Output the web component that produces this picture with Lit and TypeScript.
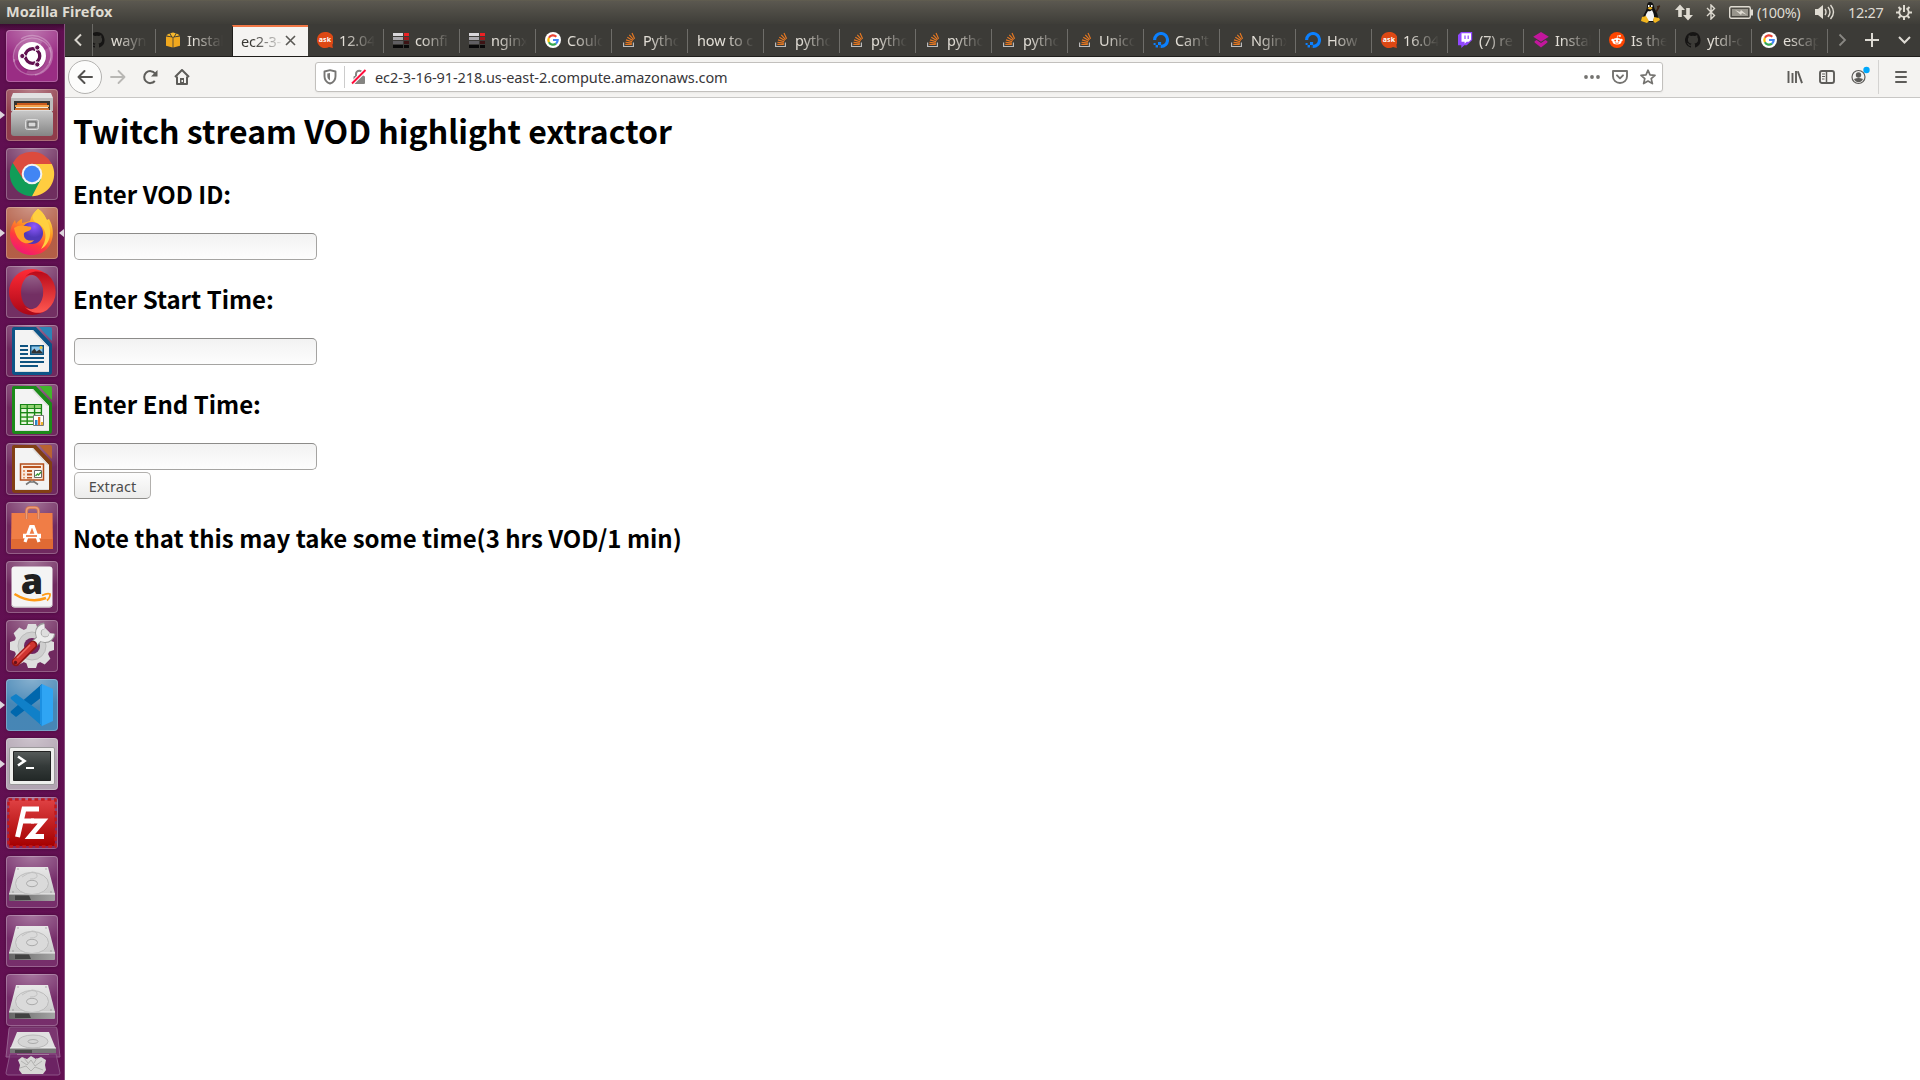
import { LitElement, html, css, TemplateResult } from "lit";
import { customElement } from "lit/decorators.js";

type Icon = () => TemplateResult;

/* ---------- tab favicons (16x16) ---------- */
const github: Icon = () => html`<svg class="fav" viewBox="0 0 16 16"><path fill="#161514" d="M8 0a8 8 0 0 0-2.5 15.6c.4.1.5-.2.5-.4v-1.500c-2.200.5-2.700-1-2.700-1-.4-.9-.9-1.200-.9-1.200-.7-.5.1-.5.1-.5.8.1 1.200.8 1.200.8.7 1.300 1.900.9 2.300.7.1-.5.3-.9.5-1.100-1.800-.2-3.600-.9-3.600-4 0-.9.300-1.600.8-2.100-.1-.2-.4-1 .1-2.100 0 0 .7-.2 2.200.8a7.500 7.500 0 0 1 4 0c1.500-1 2.200-.8 2.200-.8.4 1.100.2 1.900.1 2.100.5.6.8 1.300.8 2.100 0 3.100-1.900 3.700-3.700 3.900.3.300.6.8.6 1.500v2.200c0 .2.1.5.500.4A8 8 0 0 0 8 0z"/></svg>`;
const aws: Icon = () => html`<svg class="fav" viewBox="0 0 16 16"><path fill="#f0a81e" d="M1 4.500 7.600 5.600V15.500L1 13.700zM8.400 5.600 15 4.500v9.200L8.400 15.500z"/><path fill="#f8b92c" d="M1.300 3.200 4.400 1.600l1.700 3zM5.200 1.200 8 .4l2.800.8L8.800 4.800H7.200zM11.600 1.600l3.100 1.600-4.800 1.400z"/></svg>`;
const ask: Icon = () => html`<svg class="fav" viewBox="0 0 16 16"><path fill="#dd4814" d="M8 0a8 8 0 1 0 4 14.900c1.200.3 2.400.8 3.900 1-.3-1.300-.5-2.400-.4-3.600A8 8 0 0 0 8 0z"/><text x="7.900" y="10.400" text-anchor="middle" font-family="Open Sans, sans-serif" font-weight="700" font-size="7" textLength="12.500" fill="#fff">ask</text></svg>`;
const bars: Icon = () => html`<svg class="fav" viewBox="0 0 16 16" shape-rendering="crispEdges"><path fill="#d9d7da" d="M0 1h10v3H0z"/><path fill="#ee2124" d="M11 1h5v3h-5z"/><path fill="#aaa8ac" d="M0 5h10v3H0z"/><path fill="#a1181c" d="M11 5h5v3h-5z"/><path fill="#605f62" d="M0 9h10v3H0z"/><path fill="#3d1415" d="M11 9h5v3h-5z"/><path fill="#090909" d="M0 13h10v3H0zM11 13h5v3h-5z"/></svg>`;
const google: Icon = () => html`<svg class="fav" viewBox="0 0 16 16"><circle cx="8" cy="8" r="8" fill="#fff"/><g fill="none" stroke-width="2.200"><path stroke="#ea4335" d="M3.900 5.800A4.700 4.700 0 0 1 11.300 4.700"/><path stroke="#fbbc05" d="M3.900 10.200a4.700 4.700 0 0 1 0-4.400"/><path stroke="#34a853" d="M3.900 10.200A4.700 4.700 0 0 0 11 11.600"/><path stroke="#4285f4" d="M8 8h4.700a4.700 4.700 0 0 1-1.700 3.600"/></g></svg>`;
const stack: Icon = () => html`<svg class="fav" viewBox="0 0 16 16"><path fill="none" stroke="#bcbbbb" stroke-width="1.200" d="M2.600 10.500v4h9.800v-4"/><g stroke="#e87922" stroke-width="1.150"><path d="M4.300 12.400h6.500M4.400 10.300l6.500.8M5 7.900l6.200 1.900M6.300 5.300l5.500 3.300M8.300 2.900l4.300 4.800M11 1.100l2.600 5.700"/></g></svg>`;
const ocean: Icon = () => html`<svg class="fav" viewBox="0 0 16 16"><path fill="none" stroke="#0b80ff" stroke-width="3.100" d="M1.600 8A6.450 6.450 0 1 1 8 14.400"/><path fill="#0b80ff" d="M5 9.900h3.100V13H5zM2.600 13H5v2.400H2.600zM.6 11h2v2h-2z"/><path fill="#0b80ff" d="M6.500 12.900H8V16H6.500z" opacity=".35"/></svg>`;
const twitch: Icon = () => html`<svg class="fav" viewBox="0 0 16 16"><path fill="#9147ff" d="M4 0 1 3v10.200h3.300V16l3-2.800h2.500L15.200 8V0z"/><path fill="#fff" d="M4.500 1.200H14v6.300l-2.200 2.200H9.600l-2 2v-2H4.500z"/><path fill="#9147ff" d="M7.400 3.400h1.200V7H7.400zM10.600 3.400h1.200V7h-1.200z"/></svg>`;
const layers: Icon = () => html`<svg class="fav" viewBox="0 0 16 16"><path fill="#c2169c" d="M8 0l7.800 4.800L8 9.700.2 4.800zM1.600 9.200 3.600 8 8 10.900 12.400 8l2 1.200v1.400L8 15.600l-6.400-5z"/></svg>`;
const reddit: Icon = () => html`<svg class="fav" viewBox="0 0 16 16"><circle cx="8" cy="8" r="8" fill="#ff4500"/><ellipse cx="8" cy="9.300" rx="4.500" ry="3.300" fill="#fff"/><circle cx="3.500" cy="8" r="1.200" fill="#fff"/><circle cx="12.500" cy="8" r="1.200" fill="#fff"/><circle cx="11" cy="3.900" r=".9" fill="#fff"/><path d="M8 6.500l.6-2.800 2.400.4" stroke="#fff" stroke-width=".7" fill="none"/><circle cx="6.200" cy="8.600" r=".9" fill="#ff4500"/><circle cx="9.800" cy="8.600" r=".9" fill="#ff4500"/><path d="M6 10.700q2 1.300 4 0" stroke="#ff4500" stroke-width=".7" fill="none"/></svg>`;

/* ---------- launcher icons (52x52 tiles) ---------- */
const ubuntu: Icon = () => html`<svg class="art" viewBox="0 0 52 52"><g fill="none" stroke="#fff" stroke-opacity=".28" stroke-width="1.300"><path d="M8 32C4 14 22 2 37 11c8 5 10 15 6 22"/><path d="M15 9c15-10 35 3 31 20-2 9-9 15-17 16"/><path d="M44 17c6 15-8 32-24 27-7-2-12-8-12-15"/></g><path fill="#fff" opacity=".13" d="M8 31C4 14 22 2 37 11L26 26zM44 17c6 15-8 32-24 27l8-18z"/><circle cx="26" cy="27" r="14.300" fill="#590b49" opacity=".3"/><circle cx="26" cy="26" r="14" fill="#fff"/><circle cx="26.500" cy="26" r="7.200" fill="none" stroke="#611150" stroke-width="3.400"/><path stroke="#fff" stroke-width="1.200" d="M26.500 26 17 26M26.500 26l5-8.500M26.500 26l5 8.500"/><circle cx="26.500" cy="26" r="5.400" fill="#fff"/><g fill="#611150" stroke="#fff" stroke-width="1"><circle cx="16.300" cy="26" r="2.600"/><circle cx="31.300" cy="17.500" r="2.600"/><circle cx="31.300" cy="34.500" r="2.600"/></g></svg>`;
const files: Icon = () => html`<svg class="art" viewBox="0 0 52 52"><defs><linearGradient id="fg" x2="0" y2="1"><stop stop-color="#c9c9c9"/><stop offset="1" stop-color="#858585"/></linearGradient></defs><path fill="#e2e2e2" d="M7 4h38l2 5v10H5V9z"/><path fill="#bcbcbc" d="M5 9h42v13H5z"/><path fill="#353330" d="M8 12h36v11H8z"/><path fill="#c8591c" d="M11 14h30v3H11z"/><path fill="#f4a24b" d="M9 16h34v2H9z"/><path fill="#f4ead5" d="M10 18h32v1.200H10z"/><path fill="#de742c" d="M9 19.200h34v2H9z"/><path fill="url(#fg)" d="M7 21h38l2 3v20q0 3-3 3H8q-3 0-3-3V24z"/><path d="M7 21.500h38" stroke="#ddd"/><rect x="19.500" y="30.500" width="13" height="10" rx="2" fill="#aaa" stroke="#ddd"/><rect x="22" y="33" width="8" height="5" fill="#d8d8d8" stroke="#555"/></svg>`;
const chrome: Icon = () => html`<svg class="art" viewBox="0 0 52 52"><path fill="#109d58" d="M26 26 6.800 14.900A22.200 22.200 0 0 0 26 48.200L35.600 31.500z"/><path fill="#ffcd40" d="M26 16h19.800A22.200 22.200 0 0 1 26 48.200L35 31z"/><path fill="#dc4b3e" d="M26 3.800A22.200 22.200 0 0 0 6.800 14.900L17 31l9-15h19.800A22.200 22.200 0 0 0 26 3.800z"/><circle cx="26" cy="26" r="10.300" fill="#f3f3f3"/><circle cx="26" cy="26" r="8.300" fill="#4285f4"/></svg>`;
const firefox: Icon = () => html`<svg class="art" viewBox="0 0 52 52"><defs><linearGradient id="ff" x1=".75" y1="0" x2=".3" y2="1"><stop stop-color="#fff34f"/><stop offset=".4" stop-color="#ff9a22"/><stop offset=".7" stop-color="#ff3b3c"/><stop offset="1" stop-color="#f0147a"/></linearGradient><radialGradient id="fp" cx=".6" cy=".2"><stop stop-color="#9059ff"/><stop offset="1" stop-color="#5138b8"/></radialGradient></defs><path fill="url(#ff)" d="M32 2c5 3 7 7 9 11l2-1c9 15 2 36-17 36C12 48 4 38 4 27c0-5 2-10 5-14l1 4c2-3 4-4 6-5l0 4c4-1 6-1 8-2 1-5 4-9 8-12z"/><circle cx="26" cy="26" r="11" fill="url(#fp)"/><path fill="#ff9d27" d="M8 21c4-3 8-3 12-2 4 1 6 0 5 3-1 2-4 2-7 4-1 6 4 9 10 7-4 6-17 5-20-12z"/><path fill="#ffd040" d="M32 2c-5 4-7 9-3 13 11 4 14 15 6 27 10-5 12-20 5-30-2-4-4-8-8-10z"/></svg>`;
const opera: Icon = () => html`<svg class="art" viewBox="0 0 52 52"><defs><linearGradient id="og" x2="0" y2="1"><stop stop-color="#ff2b36"/><stop offset="1" stop-color="#aa0717"/></linearGradient><linearGradient id="oh" x2="0" y2="1"><stop stop-color="#b90a1a"/><stop offset="1" stop-color="#ff5750"/></linearGradient></defs><path fill="url(#og)" fill-rule="evenodd" d="M26 3a23 23 0 1 0 0 46 23 23 0 1 0 0-46zM26.500 9c7 0 11 8 11 17s-4 17-11 17-11.500-8-11.500-17 4.500-17 11.500-17z"/><path fill="url(#oh)" d="M19 11c4-5 12-8 22-3a23 23 0 0 1 0 36c-7 5-17 3-22-3 4 3 9 3 13-1 7-7 7-21 0-28-4-4-9-4-13-1z"/></svg>`;
const office = (edge: string, fold: string, inner: TemplateResult) => html`<svg class="art" viewBox="0 0 52 52"><path fill="${edge}" d="M8 2h22l16 17v28q0 3-3 3H9q-3 0-3-3V4q0-2 2-2z"/><path fill="#f3f3f3" d="M9 5h18l16 17v25H9z"/><path fill="#dedede" d="M9 46h34v1H9zM27 5l16 17h-2L26 6z"/><path fill="${fold}" d="M33 2h11q2 0 2 2v12z"/>${inner}</svg>`;
const writer: Icon = () => office("#0d5487", "#2d83b5", html`<svg><g fill="#0f5380"><path d="M14 20h8v2h-8zM14 24h8v2h-8zM14 28h8v2h-8zM14 32h24v2H14zM14 36h24v2H14zM14 40h18v2H14z"/><path d="M24 20h14v10H24z"/></g><path fill="#8cc8ed" d="M25.500 21.500h11v7h-11z"/><path fill="#333" d="M25.500 28.500v-2l3-3 2 3 3-2 3 3v1z"/><circle cx="35" cy="22.500" r="1.500" fill="#eec543"/></svg>`);
const calc: Icon = () => office("#1c8a19", "#43b52c", html`<svg><path fill="#93d273" d="M14 20h22v21H14z"/><path fill="#e8f7df" d="M15.500 25h5v3h-5zM22 25h6v3h-6zM29.500 25h5v3h-5zM15.500 29.500h5v3h-5zM22 29.500h6v3h-6zM29.500 29.500h5v3h-5zM15.500 34h5v2.500h-5zM22 34h6v2.500h-6zM15.500 38h5v2h-5zM22 38h6v2h-6z"/><path d="M14.500 20.500h21v20h-21zM14 24.500h22M14 28.700h22M14 33h22M14 37h22M21.200 20v21M28.500 20v21" fill="none" stroke="#188417" stroke-width="1.200"/><path fill="#fff" stroke="#777" d="M27.500 31.500h10v10h-10z"/><path fill="#2c86c6" d="M29 36h2.500v5H29z"/><path fill="#e76a23" d="M32 33h2.300v8H32z"/><path fill="#edb52d" d="M35 38h2v3h-2z"/></svg>`);
const impress: Icon = () => office("#823f14", "#b86332", html`<svg><path fill="#f9ebdf" stroke="#b34e1b" stroke-width="1.500" d="M14.500 21h23v16h-23z"/><path fill="#ba5420" d="M17 23h18v2H17zM21 27h5v2h-5zM21 30.500h5v2h-5zM21 34h5v1.500h-5z"/><path fill="#e59b6a" d="M17 27h2v2h-2zM17 30.500h2v2h-2zM17 34h2v1.500h-2z"/><path fill="#fff" stroke="#666" d="M28.500 27.500h7v7h-7z"/><path d="m29.500 33 2-2 1 1 2.500-3" fill="none" stroke="#399b32" stroke-width="1.300"/><path d="M25 38l-5 3.500M27 38l5 3.500M23 39h6" stroke="#777" stroke-width="1.600"/></svg>`);
const software: Icon = () => html`<svg class="art" viewBox="0 0 52 52"><path fill="#f07d46" d="M5.500 11h41l.5 36H5z"/><path fill="#e06a34" d="M5.200 37h41.700L47 47H5z"/><path d="M20.500 17V9.500q0-4 3.500-4h5q3.500 0 3.500 4V17" fill="none" stroke="#d07350" stroke-width="3"/><path d="M20.500 17V9.500q0-4 3.500-4h5q3.500 0 3.500 4V17" fill="none" stroke="#eb9c78" stroke-width="1.400"/><g fill="none" stroke="#fff" stroke-width="3.200"><path d="M19 40l5.700-15.500h2.600L33 40"/><path d="M17 34h18" stroke-width="4.500"/></g><path d="M20 34h11" stroke="#ef7740" stroke-width="1.700"/></svg>`;
const amazon: Icon = () => html`<svg class="art" viewBox="0 0 52 52"><rect x="5.500" y="5.500" width="41" height="41" rx="3" fill="#f4f4f4"/><path d="M6 44q0 2 3 2h34q3 0 3-2" fill="none" stroke="#c9c9c9"/><text x="26" y="33" text-anchor="middle" font-family="Open Sans, sans-serif" font-weight="800" font-size="36" fill="#202020">a</text><path d="M8.500 33q16 10 31.500 4" fill="none" stroke="#ff9a16" stroke-width="2.600"/><path d="M36 34.500q5-2.500 8-1.500 .5 3-3 6.500" fill="none" stroke="#ff9a16" stroke-width="1.800"/></svg>`;
const settings: Icon = () => html`<svg class="art" viewBox="0 0 52 52"><g fill="#dedede"><circle cx="26" cy="26" r="18"/>${[0, 45, 90, 135].map(a => html`<svg overflow="visible"><path transform="rotate(${a} 26 26)" d="M22 4h8l2 6v32l-2 6h-8l-2-6V10z"/></svg>`)}</g><circle cx="26" cy="26" r="14" fill="#cfcfcf" stroke="#bbb"/><circle cx="26" cy="26" r="8" fill="#702560"/><path d="M28 24 36 16" stroke="#999" stroke-width="7"/><path d="M38.500 5.800A7 7 0 1 0 46.200 13.500" fill="none" stroke="#999" stroke-width="6.400"/><path d="M28 24 36 16" stroke="#ececec" stroke-width="5.200"/><path d="M38.500 6.300A6.700 6.700 0 1 0 45.700 13.500" fill="none" stroke="#ececec" stroke-width="4.800"/><path d="M10 42 27 25" stroke="#8e1515" stroke-width="8.500" stroke-linecap="round"/><path d="M10 41.500 26.500 25" stroke="#cf3430" stroke-width="6" stroke-linecap="round"/><path d="M11 38 24 25" stroke="#ef6e66" stroke-width="1.400"/><circle cx="9.500" cy="42.500" r="1.700" fill="#661019"/></svg>`;
const vscode: Icon = () => html`<svg class="art" viewBox="0 0 52 52"><path fill="#0067ad" d="M36 5v13L10 38l-5-4q-1-1 0-2z"/><path fill="#1080c8" d="M36 47V34L10 15l-5 3q-1 1 0 2z"/><path fill="#2fa5f4" d="m36 5 11 5v32l-11 5-2-3V8z"/><path fill="#1c90e2" d="M36 5v42l-2-3V8z"/></svg>`;
const terminal: Icon = () => html`<svg class="art" viewBox="0 0 52 52"><defs><linearGradient id="tg" x2="0" y2="1"><stop stop-color="#565b5a"/><stop offset=".5" stop-color="#343a39"/><stop offset="1" stop-color="#222827"/></linearGradient></defs><rect x="3.500" y="9.500" width="45" height="37" rx="1.500" fill="#eeeeec" stroke="#9b999b"/><path fill="url(#tg)" stroke="#222" d="M7.500 13.500h37v29h-37z"/><path d="m12 18.500 6.500 4.500-6.500 4.500" fill="none" stroke="#fff" stroke-width="2.600"/><path d="M20 30h8" stroke="#fff" stroke-width="2"/></svg>`;
const filezilla: Icon = () => html`<svg class="art" viewBox="0 0 52 52"><defs><linearGradient id="zg" x2="0" y2="1"><stop stop-color="#df4143"/><stop offset="1" stop-color="#a50000"/></linearGradient></defs><rect x="3" y="3" width="46" height="46" fill="url(#zg)"/><rect x="2.500" y="2.500" width="47" height="47" fill="none" stroke="#c0191e" stroke-width="2.500" stroke-dasharray="3.700 2.800"/><g fill="none" stroke="#fff" stroke-width="5"><path d="M11.500 40l6.500-28h15M16 24h12"/><path d="M25 24h12L24 39.500h14"/></g></svg>`;
const drive: Icon = () => html`<svg class="art" viewBox="0 0 52 52"><defs><linearGradient id="dg" x2="0" y2="1"><stop stop-color="#e8e8e8"/><stop offset="1" stop-color="#cacaca"/></linearGradient><linearGradient id="de"><stop stop-color="#666"/><stop offset="1" stop-color="#a4a4a4"/></linearGradient></defs><path fill="url(#dg)" d="M10 11h32l7 27v1H3v-1z"/><path fill="url(#de)" d="M3 38h46v6q0 1-1 1H4q-1 0-1-1z"/><path fill="#414141" d="M9 39.500h14l2 4.500H9z"/><path d="M3 38h46" stroke="#eee"/><ellipse cx="26" cy="27.500" rx="16.500" ry="11" fill="#dadada" stroke="#bcbcbc"/><ellipse cx="26" cy="27.500" rx="5.500" ry="3.200" fill="#dcdcdc" stroke="#aaa"/><path d="M16 21q13-9 15-2 1 4-7 4" fill="none" stroke="#c2c2c2"/><g fill="#999"><circle cx="7" cy="36" r=".8"/><circle cx="45" cy="36" r=".8"/><circle cx="12" cy="13" r=".7"/><circle cx="40" cy="13" r=".7"/></g></svg>`;
const folded: Icon = () => html`<svg class="folded" viewBox="0 0 56 50"><path fill="#7b3570" stroke="#96618f" d="M6 1h44q2 0 2 2l3 28H1L4 3q0-2 2-2z"/><path fill="#e0e0e0" d="M12 6h32l6.500 16h-45z"/><path fill="#767676" d="M5 22h46v5H5z"/><path fill="#484848" d="M10 24h17v3H10z"/><path d="M5 22h46" stroke="#eee"/><ellipse cx="28" cy="15.500" rx="15" ry="6.500" fill="#d6d6d6" stroke="#bababa"/><ellipse cx="28" cy="15.500" rx="5" ry="2" fill="none" stroke="#aaa"/><path fill="#70296a" fill-opacity=".75" stroke="#8d5487" d="M5 28h46l4 19q0 2-2 2H3q-2 0-2-2z"/><path fill="#d7d7d5" d="m13 34 4-3 5 2 4-3 5 3 5-2 5 3-1 5 1 5-3 4H17l-3-4 1-5z"/><path fill="none" stroke="#b2b2b0" d="m16 35 6 4 4-5 4 6 7-5M15 42l6-2 5 5 4-4 8 3M19 32l4 5m9-5-3 5"/><path stroke="#b5a0b2" stroke-opacity=".6" d="M12 28.500h32"/></svg>`;

const tabs: { text: string; icon?: Icon; active?: boolean }[] = [
  { text: "wayn", icon: github },
  { text: "Instal", icon: aws },
  { text: "ec2-3-", active: true },
  { text: "12.04", icon: ask },
  { text: "confi", icon: bars },
  { text: "nginx", icon: bars },
  { text: "Could", icon: google },
  { text: "Pytho", icon: stack },
  { text: "how to c" },
  { text: "pytho", icon: stack },
  { text: "pytho", icon: stack },
  { text: "pytho", icon: stack },
  { text: "pytho", icon: stack },
  { text: "Unico", icon: stack },
  { text: "Can't", icon: ocean },
  { text: "Nginx", icon: stack },
  { text: "How", icon: ocean },
  { text: "16.04", icon: ask },
  { text: "(7) re", icon: twitch },
  { text: "Instal", icon: layers },
  { text: "Is the", icon: reddit },
  { text: "ytdl-o", icon: github },
  { text: "escap", icon: google },
];

const apps: { icon: Icon; tint: string; running?: boolean; focused?: boolean }[] = [
  { icon: ubuntu, tint: "#982982" },
  { icon: files, tint: "#8e3847", running: true },
  { icon: chrome, tint: "#6c2a5c" },
  { icon: firefox, tint: "#b25b43", running: true, focused: true },
  { icon: opera, tint: "#702b60" },
  { icon: writer, tint: "#6d255c" },
  { icon: calc, tint: "#6d255c" },
  { icon: impress, tint: "#6d255c" },
  { icon: software, tint: "#6d255c" },
  { icon: amazon, tint: "#6d255c" },
  { icon: settings, tint: "#6d255c" },
  { icon: vscode, tint: "#4384b4", running: true },
  { icon: terminal, tint: "#b0a2b0", running: true },
  { icon: filezilla, tint: "#7d2862" },
  { icon: drive, tint: "#742a68" },
  { icon: drive, tint: "#742a68" },
  { icon: drive, tint: "#742a68" },
];

@customElement("top-panel")
class TopPanel extends LitElement {
  static styles = css`
    :host { display: flex; align-items: center; height: 24px; box-sizing: border-box; padding: 0 8px 0 6px; color: #dfdbd2; font: 14.500px "Noto Sans", sans-serif; background: linear-gradient(#64604f 0, #5b5850 1px, #3e3d38 100%); }
    .title { font-weight: 700; letter-spacing: .1px; flex: 1; font-size: 14.500px; line-height: 22px; padding-bottom: 2px; }
    svg { display: block; }
    .tray { display: flex; align-items: center; }
    .tux { margin-right: 14px; }
    .net { margin-right: 13px; }
    .bt { margin-right: 13px; }
    .bat { margin-right: 4px; }
    .pct { letter-spacing: -.4px; width: 46px; margin-right: 12px; white-space: nowrap; line-height: 22px; padding-bottom: 1px; }
    .vol { margin-right: 13px; }
    .clock { letter-spacing: -.3px; width: 36px; margin-right: 12px; white-space: nowrap; line-height: 22px; padding-bottom: 1px; }
  `;
  render() {
    return html`<span class="title">Mozilla Firefox</span>
      <div class="tray">
        <svg class="tux" width="20" height="21" viewBox="0 0 20 21"><path fill="#111" d="M6 4q0-4 3-4t4 4c0 4 4 6 4 12l-3 4H5l-3-4c0-4 4-7 4-12z"/><path fill="#f4f4f4" d="M7 9q2 1 4-1c2 4 3 7 1 11H6c-3-4-1-7 1-10z"/><path fill="#fff" d="M7 3h1.500v2H7zM10 3h1.500v2H10z"/><path fill="#f2b51e" d="M6.500 6q3-2 5 0-2 3-5 0zM1 15l4-1 3 5-2 2-6-2zM13 15l5 1 1 2-5 3-2-2z"/><path d="m15 10 3-5M16 5l3-1" stroke="#3b2215" stroke-width="1.500"/></svg>
        <svg class="net" width="18" height="17" viewBox="0 0 18 17" fill="#dfdbd2"><path d="M5 .5 0 6h3.200v7h3.600V6H10zM11.200 4v7H8l5 5.500 5-5.500h-3.200V4z"/></svg>
        <svg class="bt" width="10" height="16" viewBox="0 0 10 16" fill="none" stroke="#dfdbd2" stroke-width="1.400"><path d="m1 4 7.500 7.500L5 15V1l3.500 3.500L1 12"/></svg>
        <svg class="bat" width="24" height="13" viewBox="0 0 24 13"><rect x=".7" y=".7" width="20.600" height="11.600" rx="1.500" fill="none" stroke="#dfdbd2" stroke-width="1.400"/><path fill="#98958c" d="M3 3h16v7H3z"/><path fill="#dfdbd2" d="M22 3.500h2v6h-2zM6 4l5 2 1-2 6 5-5-2-1 2z"/></svg>
        <span class="pct">(100%)</span>
        <svg class="vol" width="20" height="16" viewBox="0 0 20 16"><path fill="#dfdbd2" d="M0 5h3l5-4v14l-5-4H0z"/><path d="M10 5q2 3 0 6M13 3q4 5 0 10M15.500 1q6 7 0 14" fill="none" stroke="#dfdbd2" stroke-width="1.400"/></svg>
        <span class="clock">12:27</span>
        <svg width="16" height="16" viewBox="0 0 16 16" fill="none" stroke="#dfdbd2"><path d="M5.500 4.200a4.700 4.700 0 1 0 5 0" stroke-width="1.800"/><path d="M8 1v7" stroke-width="2"/><path d="M0 8.500h3M13 8.500h3M8 13v3M2.500 14l2-2M13.500 14l-2-2M2.500 3l2 2M13.500 3l-2 2" stroke-width="2"/></svg>
      </div>`;
  }
}

@customElement("app-launcher")
class AppLauncher extends LitElement {
  static styles = css`
    :host { display: flex; flex-direction: column; gap: 7px; box-sizing: border-box; width: 65px; height: 1056px; padding: 6px 0 0 6px; overflow: hidden; border-right: 1px solid #88527f; background: linear-gradient(#3b0a31 0, #600f51 7px, #621052 100%); }
    .tile { position: relative; width: 52px; height: 52px; flex: none; border-radius: 4px; box-shadow: 0 0 3px rgba(40,0,30,.5); }
    .tile::before { content: ""; position: absolute; inset: 0; border-radius: 4px; background: radial-gradient(ellipse 80% 55% at 50% 0, rgba(255,255,255,.36), rgba(255,255,255,.02)); box-shadow: inset 0 0 0 1px rgba(255,255,255,.25); }
    .art { position: relative; display: block; width: 52px; height: 52px; overflow: visible; }
    .run::after { content: ""; position: absolute; left: -6px; top: 22px; border: solid transparent; border-width: 4px 0 4px 5px; border-left-color: #ddd5dc; }
    .mark { position: absolute; right: -6px; top: 22px; border: solid transparent; border-width: 4px 5px 4px 0; border-right-color: #ddd5dc; }
    .folded { display: block; flex: none; width: 56px; height: 50px; margin: -7px 0 0 -1.500px; }
  `;
  render() {
    return html`${apps.map(a => html`<div class="tile ${a.running ? "run" : ""}" style="background-color:${a.tint}">${a.icon()}${a.focused ? html`<i class="mark"></i>` : ""}</div>`)}${folded()}`;
  }
}

@customElement("tab-strip")
class TabStrip extends LitElement {
  static styles = css`
    :host { display: flex; height: 33px; box-sizing: border-box; background: #3c3b37; border-bottom: 1px solid #1f1e1b; color: #e2ded6; font: 14.500px "Noto Sans", sans-serif; }
    svg { display: block; flex: none; }
    .arrow { width: 27px; display: flex; align-items: center; justify-content: center; border-right: 1px solid #6b6a66; }
    .list { width: 1735px; display: flex; justify-content: flex-end; overflow: hidden; }
    .tab { position: relative; flex: none; width: 76px; height: 33px; box-sizing: border-box; display: flex; align-items: center; padding: 0 9px 1px 9px; }
    .tab::after { content: ""; position: absolute; right: 0; top: 5px; width: 1px; height: 24px; background: #6e6d69; }
    .fav { width: 16px; height: 16px; margin-right: 6px; }
    .label { flex: 1; min-width: 0; overflow: hidden; white-space: nowrap; letter-spacing: -.15px; line-height: 24px; -webkit-mask-image: linear-gradient(90deg, #000 calc(100% - 30px), transparent); mask-image: linear-gradient(90deg, #000 calc(100% - 30px), transparent); }
    .active { height: 32px; background: #f5f4f2; color: #3a3935; border-top: 2px solid #f07746; border-left: 1px solid #1f1e1b; padding: 0 12px 3px 8px; margin-top: 1px; }
    .active .label { margin-right: 1px; }
    .active::after, .before::after { display: none; }
    .end { flex: 1; display: flex; align-items: center; padding-bottom: 1px; }
    .more { margin-left: 10px; margin-right: 18px; }
    .plus { margin-right: 19px; }
  `;
  render() {
    return html`<div class="arrow"><svg width="9" height="14" viewBox="0 0 9 14" fill="none" stroke="#d8d5ce" stroke-width="2"><path d="M7 1.500 1.500 7 7 12.500"/></svg></div>
      <div class="list">${tabs.map((t, i) => html`<div class="tab ${t.active ? "active" : ""} ${i === 1 ? "before" : ""}">${t.icon ? t.icon() : ""}<span class="label">${t.text}</span>${t.active ? html`<svg width="11" height="11" viewBox="0 0 11 11" stroke="#5a5955" stroke-width="1.600"><path d="m1 1 9 9M10 1l-9 9"/></svg>` : ""}</div>`)}</div>
      <div class="end">
        <svg class="more" width="9" height="14" viewBox="0 0 9 14" fill="none" stroke="#898783" stroke-width="1.800"><path d="M1.500 1.500 7 7l-5.500 5.500"/></svg>
        <svg class="plus" width="14" height="14" viewBox="0 0 14 14" stroke="#dedbd4" stroke-width="2"><path d="M7 0v14M0 7h14"/></svg>
        <svg width="13" height="8" viewBox="0 0 13 8" fill="none" stroke="#dedbd4" stroke-width="2"><path d="m1 1 5.500 5.500L12 1"/></svg>
      </div>`;
  }
}

@customElement("nav-bar")
class NavBar extends LitElement {
  static styles = css`
    :host { display: flex; align-items: center; height: 41px; box-sizing: border-box; background: #f4f3f1; border-bottom: 1px solid #c8c7c5; padding: 0 11px 0 3px; color: #5d5c59; }
    svg { display: block; flex: none; }
    .back { width: 34px; height: 34px; flex: none; box-sizing: border-box; border: 1px solid #b3b2b0; border-radius: 50%; background: #fcfcfb; display: grid; place-items: center; margin-right: 8px; }
    .fwd, .reload { margin-right: 16px; }
    .home { margin-right: 125px; }
    .url { width: 1348px; height: 30px; flex: none; box-sizing: border-box; border: 1px solid #c2c0bd; border-radius: 3px; background: #fff; display: flex; align-items: center; padding: 0 6px 0 6px; box-shadow: 0 1px 2px rgba(0,0,0,.05); }
    .sep { width: 1px; height: 22px; background: #ccc; margin: 0 6px 0 6px; }
    .addr { flex: 1; margin-left: 8px; color: #38373a; font: 14.500px "Noto Sans", sans-serif; letter-spacing: -.09px; white-space: nowrap; }
    .dots, .pocket { margin-right: 12px; }
    .right { flex: 1; display: flex; align-items: center; justify-content: flex-end; }
    .lib, .side { margin-right: 16px; }
    .vline { width: 1px; height: 34px; background: #d4d3d1; margin: 0 14px 0 11px; }
    .acct { overflow: visible; }
  `;
  render() {
    return html`<div class="back"><svg width="16" height="16" viewBox="0 0 16 16" fill="none" stroke="#53524f" stroke-width="2" stroke-linecap="round" stroke-linejoin="round"><path d="M15 8H1.500M7.500 2l-6 6 6 6"/></svg></div>
      <svg class="fwd" width="16" height="16" viewBox="0 0 16 16" fill="none" stroke="#b8b7b4" stroke-width="1.800" stroke-linecap="round" stroke-linejoin="round"><path d="M1 8h13.500M8.500 2l6 6-6 6"/></svg>
      <svg class="reload" width="16" height="16" viewBox="0 0 16 16" fill="none" stroke="#5d5c59" stroke-width="2"><path d="M12.800 12A6 6 0 1 1 13 4.500"/><path fill="#5d5c59" stroke="none" d="M15.500 1v6.500H9z"/></svg>
      <svg class="home" width="16" height="16" viewBox="0 0 16 16" fill="none" stroke="#5d5c59" stroke-width="2" stroke-linejoin="round"><path d="M1 8l7-7 7 7"/><path d="M3 7.500V15h10V7.500"/><path fill="#5d5c59" stroke="none" d="M6 9h4v6H6z"/><path fill="#f4f3f1" stroke="none" d="M7.500 11H9v2H7.500z"/></svg>
      <div class="url">
        <svg width="16" height="16" viewBox="0 0 16 16"><path d="M8 1.200 13.500 2.500v4.700c0 3.500-2.500 6.300-5.500 7.300-3-1-5.500-3.800-5.500-7.300V2.500z" fill="none" stroke="#777674" stroke-width="1.900" stroke-linejoin="round"/><path fill="#777674" d="M8 4v7.500C6 10.300 5.300 8.800 5.300 7V4.600z"/></svg>
        <i class="sep"></i>
        <svg width="16" height="16" viewBox="0 0 16 16"><path fill="none" stroke="#858481" stroke-width="2" d="M5 8V5a3.200 3.200 0 0 1 6.400 0v3"/><rect x="2.500" y="7" width="11.500" height="8" rx="1" fill="#858481"/><path d="M1 14.500 14.500 1" stroke="#fff" stroke-width="4"/><path d="M1 14.500 14.500 1" stroke="#ff0d3b" stroke-width="1.900"/></svg>
        <span class="addr">ec2-3-16-91-218.us-east-2.compute.amazonaws.com</span>
        <svg class="dots" width="16" height="16" viewBox="0 0 16 16" fill="#747370"><circle cx="2" cy="8" r="1.900"/><circle cx="8" cy="8" r="1.900"/><circle cx="14" cy="8" r="1.900"/></svg>
        <svg class="pocket" width="16" height="16" viewBox="0 0 16 16" fill="none" stroke="#747370" stroke-width="1.900" stroke-linejoin="round" stroke-linecap="round"><path d="M1 2h14v5.500a7 6.500 0 0 1-14 0zM5 6.300l3 3 3-3"/></svg>
        <svg width="16" height="16" viewBox="0 0 16 16" fill="none" stroke="#747370" stroke-width="1.700" stroke-linejoin="round"><path d="m8 1.200 2 4.600 5 .5-3.800 3.300 1.200 5L8 12l-4.400 2.600 1.200-5L1 6.300l5-.5z"/></svg>
      </div>
      <div class="right">
        <svg class="lib" width="16" height="16" viewBox="0 0 16 16" stroke="#5d5c59" stroke-width="1.900"><path d="M1.500 2v12M5.500 4v10M9 2v12M10.800 2.300l4.200 11.800"/></svg>
        <svg class="side" width="16" height="16" viewBox="0 0 16 16" fill="none" stroke="#5d5c59"><rect x="1" y="2" width="14" height="12" rx="2" stroke-width="1.900"/><path d="M7.500 2v12" stroke-width="1.500"/><path d="M3 5h3M3 7.500h3M3 10h2.500" stroke-width="1.100"/></svg>
        <svg class="acct" width="16" height="16" viewBox="0 0 16 16"><circle cx="7.500" cy="8" r="6.500" fill="none" stroke="#5d5c59" stroke-width="1.200"/><circle cx="7.500" cy="6" r="2.700" fill="#5d5c59"/><path fill="#5d5c59" d="M3 10q4.500-2 9 0-1.500 3.300-4.500 3.300T3 10z"/><circle cx="15.500" cy="1" r="3.200" fill="#00a8fb"/></svg>
        <i class="vline"></i>
        <svg width="16" height="16" viewBox="0 0 16 16" stroke="#5d5c59" stroke-width="2" stroke-linecap="round"><path d="M3 3h10M3 8h10M3 13h10"/></svg>
      </div>`;
  }
}

@customElement("app-root")
class AppRoot extends LitElement {
  static styles = css`
    :host { display: block; width: 1920px; height: 1080px; overflow: hidden; background: #fff; }
    .desk { display: flex; height: 1056px; }
    .window { flex: 1; min-width: 0; }
    .page { padding: 9px 9px 0; color: #000; font-family: "Noto Sans CJK JP", sans-serif; }
    h1 { margin: 0 0 23px -1px; font-size: 32px; line-height: 46px; font-weight: 700; }
    h2 { margin: 0 0 22px -1px; font-size: 24px; line-height: 35px; font-weight: 700; }
    .field { display: block; width: 243px; height: 27px; margin: 0 0 21px; padding: 0 6px; box-sizing: border-box; border: 1px solid #a5a4a2; border-top-color: #8c8b89; border-radius: 5px; background: linear-gradient(#f2f2f2, #fdfdfd); outline: none; }
    .last { margin-bottom: 2px; }
    .go { display: block; width: 77px; height: 27px; margin: 0 0 21px; padding: 0; border: 1px solid #b2b0ad; border-bottom-color: #8f8e8b; border-radius: 5px; background: linear-gradient(#fdfdfd, #ececeb); color: #4c4c4c; font: 14.500px "Noto Sans", sans-serif; letter-spacing: .1px; }
  `;
  render() {
    return html`<top-panel></top-panel>
      <div class="desk">
        <app-launcher></app-launcher>
        <div class="window">
          <tab-strip></tab-strip>
          <nav-bar></nav-bar>
          <div class="page">
            <h1>Twitch stream VOD highlight extractor</h1>
            <h2>Enter VOD ID:</h2>
            <input class="field" />
            <h2>Enter Start Time:</h2>
            <input class="field" />
            <h2>Enter End Time:</h2>
            <input class="field last" />
            <button class="go">Extract</button>
            <h2>Note that this may take some time(3 hrs VOD/1 min)</h2>
          </div>
        </div>
      </div>`;
  }
}
